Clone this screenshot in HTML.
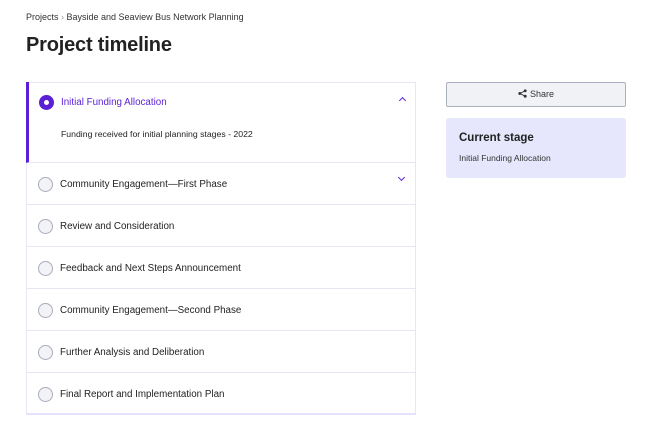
<!DOCTYPE html>
<html><head><style>
*{box-sizing:border-box;margin:0;padding:0}
body{width:661px;height:431px;background:#fff;font-family:"Liberation Sans",sans-serif;color:#222;position:relative;overflow:hidden}
.abs{position:absolute}
.bc{left:26px;top:12px;font-size:9px;color:#333}
h1{position:absolute;left:26px;top:34px;font-size:20px;font-weight:bold;color:#222;letter-spacing:-0.2px}
.panel{left:26px;top:82px;width:390px;height:333px;border:1px solid #e6e6f5;border-bottom:2px solid #e3e1fb}
.first{position:absolute;left:-1px;top:-1px;width:390px;height:81px;border-left:3px solid #5b1fd6;border-bottom:1px solid #e6e6f5}
.row{position:absolute;left:0;width:388px;height:42px;border-bottom:1px solid #e6e6f5;font-size:9.8px;color:#222}
.row .c{position:absolute;left:11px;top:14px;width:15px;height:15px;border-radius:50%;border:1px solid #aab;background:#f2f3f7}
.row span{position:absolute;left:33px;top:16px}
.chev{position:absolute;right:11px;width:5px;height:5px;border-left:1.2px solid #5b1fd6;border-top:1.2px solid #5b1fd6}
</style></head><body>
<div class="abs bc">Projects <span style="color:#999">›</span> Bayside and Seaview Bus Network Planning</div>
<h1>Project timeline</h1>
<div class="abs panel">
 <div class="first">
  <div class="abs" style="left:10px;top:13px;width:15px;height:15px;border-radius:50%;background:#5b1fd6"><div class="abs" style="left:5px;top:5px;width:5px;height:5px;border-radius:50%;background:#fff"></div></div>
  <div class="abs" style="left:32px;top:15px;font-size:9.8px;color:#5b1fd6">Initial Funding Allocation</div>
  <div class="chev" style="top:16px;transform:rotate(45deg)"></div>
  <div class="abs" style="left:32px;top:47px;font-size:8.7px;color:#222">Funding received for initial planning stages - 2022</div>
 </div>
 <div class="row" style="top:80px"><div class="c"></div><span>Community Engagement—First Phase</span><div class="chev" style="top:12px;transform:rotate(-135deg)"></div></div>
 <div class="row" style="top:122px"><div class="c"></div><span>Review and Consideration</span></div>
 <div class="row" style="top:164px"><div class="c"></div><span>Feedback and Next Steps Announcement</span></div>
 <div class="row" style="top:206px"><div class="c"></div><span>Community Engagement—Second Phase</span></div>
 <div class="row" style="top:248px"><div class="c"></div><span>Further Analysis and Deliberation</span></div>
 <div class="row" style="top:290px;border-bottom:none"><div class="c"></div><span>Final Report and Implementation Plan</span></div>
</div>
<div class="abs" style="left:446px;top:82px;width:180px;height:25px;border:1px solid #aab0bd;background:#f1f2f6;border-radius:2px;font-size:9px;color:#333;text-align:center;line-height:23px">
<svg width="9" height="9" viewBox="0 0 10 10" style="vertical-align:-1px;margin-right:3px"><circle cx="2" cy="5" r="1.6" fill="#333"/><circle cx="8" cy="2" r="1.6" fill="#333"/><circle cx="8" cy="8" r="1.6" fill="#333"/><path d="M2 5L8 2M2 5L8 8" stroke="#333" stroke-width="1"/></svg>Share</div>
<div class="abs" style="left:446px;top:118px;width:180px;height:60px;background:#e6e7fc;border-radius:3px">
 <div class="abs" style="left:13px;top:14px;font-size:11.5px;font-weight:bold;color:#222">Current stage</div>
 <div class="abs" style="left:13px;top:35px;font-size:8.5px;color:#333">Initial Funding Allocation</div>
</div>
</body></html>
